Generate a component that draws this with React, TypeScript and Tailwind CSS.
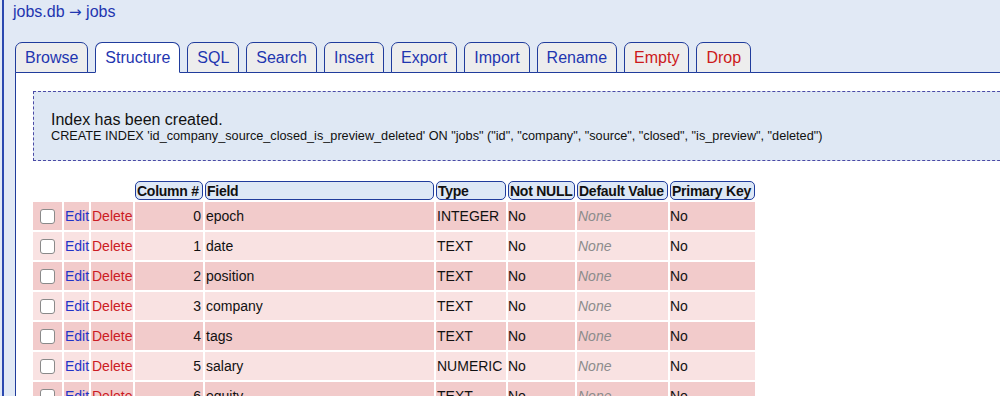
import React from 'react'

const tabs = [
  { label: 'Browse' },
  { label: 'Structure', active: true },
  { label: 'SQL' },
  { label: 'Search' },
  { label: 'Insert' },
  { label: 'Export' },
  { label: 'Import' },
  { label: 'Rename' },
  { label: 'Empty', danger: true },
  { label: 'Drop', danger: true },
]

const columns = [
  { name: 'epoch', type: 'INTEGER' },
  { name: 'date', type: 'TEXT' },
  { name: 'position', type: 'TEXT' },
  { name: 'company', type: 'TEXT' },
  { name: 'tags', type: 'TEXT' },
  { name: 'salary', type: 'NUMERIC' },
  { name: 'equity', type: 'TEXT' },
  { name: 'source', type: 'TEXT' },
]

const headers = [
  { label: 'Column #', w: 'w-[68px]' },
  { label: 'Field', w: 'w-[229px]' },
  { label: 'Type', w: 'w-[70px]' },
  { label: 'Not NULL', w: 'w-[67px]' },
  { label: 'Default Value', w: 'w-[91px]' },
  { label: 'Primary Key', w: 'w-[85px]' },
]

export default function App() {
  return (
    <div
      className="h-[396px] overflow-hidden bg-[#e1e9f5] pl-[2px]"
      style={{ fontFamily: '"Liberation Sans", Arial, sans-serif' }}
    >
      <div className="h-full border-l-2 border-[#2b48b0] pl-[11px]">
        {/* Breadcrumb */}
        <div className="-ml-[2px] pt-[3px] text-[16px] leading-[18px] text-[#1f36b0]">
          jobs.db <span style={{ fontFamily: '"DejaVu Sans", sans-serif' }} className="text-[15px]">→</span> jobs
        </div>

        {/* Tabs */}
        <div className="mt-[21px] flex items-end gap-[7px]">
          {tabs.map((tab) => (
            <div
              key={tab.label}
              className={
                'relative z-10 -mb-px flex h-[31px] items-center rounded-t-[7px] border border-[#203c9c] px-[9px] text-[16px] ' +
                (tab.active ? 'border-b-white bg-white ' : 'border-b-[#203c9c] bg-[#ededed] ') +
                (tab.danger ? 'text-[#cc1a1a]' : 'text-[#1f36b0]')
              }
            >
              {tab.label}
            </div>
          ))}
        </div>

        {/* Panel */}
        <div className="h-full w-[1100px] border-l border-t border-[#203c9c] bg-white pl-[17px] pt-[18px]">
          <div className="border border-dashed border-[#4a4aa6] bg-[#dfe8f4] pb-[17px] pl-[17px] pt-[19px] text-[#111]">
            <div className="text-[16px] leading-[18px]">Index has been created.</div>
            <div className="text-[12.7px] leading-[14px]">
              CREATE INDEX 'id_company_source_closed_is_preview_deleted' ON "jobs" ("id", "company", "source",
              "closed", "is_preview", "deleted")
            </div>
          </div>

          <table className="-ml-[2px] mt-[18px] w-[726px] table-fixed border-separate border-spacing-[2px] text-[14px] text-[#111]">
            <thead>
              <tr>
                <th className="w-[29px]"></th>
                <th className="w-[25px]"></th>
                <th className="w-[42px]"></th>
                {headers.map((h) => (
                  <th
                    key={h.label}
                    className={
                      h.w +
                      ' h-[19px] rounded-[5px] border border-[#203c9c] bg-[#dde8f6] pl-px text-left text-[14px] font-bold leading-[16px] tracking-[-0.25px] whitespace-nowrap'
                    }
                  >
                    {h.label}
                  </th>
                ))}
              </tr>
            </thead>
            <tbody>
              {columns.map((col, i) => {
                const bg = i % 2 === 0 ? 'bg-[#f2cbcb]' : 'bg-[#f9e2e2]'
                return (
                  <tr key={col.name} className="h-[28px]">
                    <td className={bg + ' p-0'}>
                      <div className="mx-auto h-[15px] w-[15px] rounded-[3px] border border-[#8a8a8a] bg-white"></div>
                    </td>
                    <td className={bg + ' pl-px text-[#2434c8]'}>Edit</td>
                    <td className={bg + ' pl-px text-[#cc1a24]'}>Delete</td>
                    <td className={bg + ' pr-[2px] text-right'}>{i}</td>
                    <td className={bg + ' pl-px'}>{col.name}</td>
                    <td className={bg + ' pl-px whitespace-nowrap'}>{col.type}</td>
                    <td className={bg + ' pl-0'}>No</td>
                    <td className={bg + ' pl-px italic text-[#8c8c8c]'}>None</td>
                    <td className={bg + ' pl-0'}>No</td>
                  </tr>
                )
              })}
            </tbody>
          </table>
        </div>
      </div>
    </div>
  )
}
